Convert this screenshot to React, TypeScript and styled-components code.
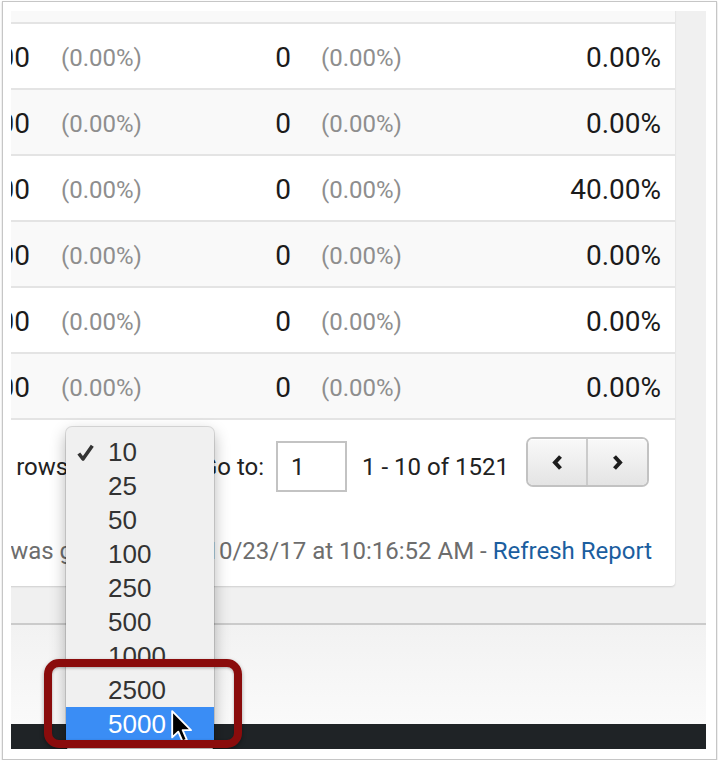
import styled, { createGlobalStyle } from "styled-components";

const GlobalStyle = createGlobalStyle`
	html, body {
		margin: 0;
		padding: 0;
		background: #fff;
	}
	body {
		font-family: Roboto, "Liberation Sans", Arial, sans-serif;
	}
`;

const Frame = styled.div`
	position: relative;
	box-sizing: border-box;
	width: 715px;
	height: 759px;
	margin: 1px 0 0 2px;
	padding: 9px 10px 10px 8px;
	border: 1px solid #c6c6c6;
	box-shadow: 0 1px 2px rgba(0, 0, 0, 0.2);
	background: #fff;
`;

const Viewport = styled.div`
	position: relative;
	height: 100%;
	overflow: hidden;
	display: flex;
	flex-direction: column;
	background: #f0f0f0;
`;

const ReportArea = styled.section`
	padding-bottom: 37px;
`;

const Card = styled.div`
	width: 814px;
	margin: -53px 0 0 -150px;
	background: #fff;
	border-radius: 0 0 4px 0;
	box-shadow: 0 1px 2px rgba(0, 0, 0, 0.14);
`;

const Row = styled.div<{ $striped: boolean }>`
	display: grid;
	grid-template-columns: 169px 110px 151px 160px 224px;
	align-items: center;
	box-sizing: border-box;
	height: 66px;
	padding-top: 4px;
	border-bottom: 2px solid #e4e4e4;
	background: ${(p) => (p.$striped ? "#f9f9f9" : "#fff")};
	font-size: 28px;
	line-height: 1;
`;

const Value = styled.div`
	text-align: right;
	color: #1b1b1b;
	white-space: nowrap;
`;

const LastValue = styled(Value)`
	padding-right: 14px;
`;

const Share = styled.div<{ $indent: number }>`
	padding-left: ${(p) => p.$indent}px;
	font-size: 24px;
	color: #8e8e8e;
	white-space: nowrap;
`;

const Pager = styled.div`
	display: flex;
	justify-content: flex-end;
	align-items: center;
	height: 59px;
	padding: 17px 26px 0 0;
	font-size: 24px;
	line-height: 28px;
	color: #222;
`;

const PagerText = styled.span<{ $gap: number }>`
	margin-right: ${(p) => p.$gap}px;
	white-space: nowrap;
`;

const RowsSelect = styled.div`
	width: 103px;
	height: 44px;
	margin: 0 12px;
	box-sizing: border-box;
	border: 2px solid #c4c4c4;
	border-radius: 6px;
	background: #f6f6f6;
`;

const PageInput = styled.div`
	box-sizing: border-box;
	width: 71px;
	height: 51px;
	margin-right: 15px;
	padding: 10px 13px;
	border: 2px solid #c3c3c3;
	font-size: 24px;
	line-height: 28px;
	color: #222;
`;

const NavGroup = styled.div`
	display: flex;
	box-sizing: border-box;
	height: 50px;
	margin-bottom: 9px;
	border: 2px solid #c2c2c2;
	border-radius: 7px;
	overflow: hidden;
`;

const NavButton = styled.div<{ $divider?: boolean }>`
	display: flex;
	align-items: center;
	justify-content: center;
	width: ${(p) => (p.$divider ? 59 : 58)}px;
	border-left: ${(p) => (p.$divider ? "2px solid #cbcbcb" : "none")};
	background: linear-gradient(#f9f9f9, #e4e4e4);
	box-shadow: inset 0 1px 0 #fff;
`;

const Footer = styled.p`
	margin: 41px 0 0;
	padding: 0 23px 21px 0;
	text-align: right;
	font-size: 24px;
	line-height: 28px;
	color: #6d6d6d;
	white-space: nowrap;
`;

const Link = styled.a`
	color: #1b5e9f;
	text-decoration: none;
`;

const Rule = styled.div`
	height: 2px;
	background: #cbcbcb;
`;

const LowerPanel = styled.div`
	flex: 1;
	background: linear-gradient(#f2f2f2, #fafafa);
`;

const DarkBar = styled.div`
	height: 25px;
	background: #1f2326;
`;

const Menu = styled.ul`
	position: absolute;
	left: 55px;
	top: 416px;
	width: 148px;
	margin: 0;
	padding: 8px 0 10px;
	list-style: none;
	box-sizing: border-box;
	background: #f0f0f0;
	border-radius: 6px;
	box-shadow: 0 0 0 1px rgba(0, 0, 0, 0.12), 0 6px 16px rgba(0, 0, 0, 0.3);
	font-family: "Liberation Sans", Arial, sans-serif;
`;

const MenuItem = styled.li<{ $active?: boolean }>`
	position: relative;
	height: 34px;
	padding-left: 42px;
	font-size: 26px;
	line-height: 34px;
	color: ${(p) => (p.$active ? "#fff" : "#333")};
	background: ${(p) => (p.$active ? "#3a8df5" : "transparent")};
`;

const Check = styled.svg`
	position: absolute;
	left: 11px;
	top: 9px;
`;

const Highlight = styled.div`
	position: absolute;
	left: 33px;
	top: 648px;
	width: 198px;
	height: 89px;
	box-sizing: border-box;
	border: 8px solid #8a0c0c;
	border-radius: 15px;
	box-shadow: 0 2px 4px rgba(0, 0, 0, 0.35), inset 0 1px 3px rgba(0, 0, 0, 0.3);
`;

const Pointer = styled.svg`
	position: absolute;
	left: 160px;
	top: 699px;
`;

const rates = ["", "0.00%", "0.00%", "40.00%", "0.00%", "0.00%", "0.00%"];
const sizes = ["10", "25", "50", "100", "250", "500", "1000", "2500", "5000"];

const Chevron = ({ flip }: { flip?: boolean }) => (
	<svg width="13" height="17" viewBox="0 0 13 17" style={flip ? { transform: "scaleX(-1)" } : undefined}>
		<polyline points="9.5,2.5 4,8.5 9.5,14.5" fill="none" stroke="#1d1d1d" strokeWidth="4" />
	</svg>
);

const App = () => {
	return (
		<>
			<GlobalStyle />
			<Frame>
				<Viewport>
					<ReportArea>
						<Card>
							{rates.map((rate, i) => (
								<Row key={i} $striped={i % 2 === 0}>
									<Value>$0.00</Value>
									<Share $indent={31}>(0.00%)</Share>
									<Value>0</Value>
									<Share $indent={30}>(0.00%)</Share>
									<LastValue>{rate || "0.00%"}</LastValue>
								</Row>
							))}
							<Pager>
								<PagerText $gap={0}>Show rows:</PagerText>
								<RowsSelect />
								<PagerText $gap={12}>Go to:</PagerText>
								<PageInput>1</PageInput>
								<PagerText $gap={17}>1 - 10 of 1521</PagerText>
								<NavGroup>
									<NavButton>
										<Chevron />
									</NavButton>
									<NavButton $divider>
										<Chevron flip />
									</NavButton>
								</NavGroup>
							</Pager>
							<Footer>
								This report was generated on 10/23/17 at 10:16:52 AM - <Link href="#">Refresh Report</Link>
							</Footer>
						</Card>
					</ReportArea>
					<Rule />
					<LowerPanel />
					<DarkBar />

					<Menu>
						{sizes.map((size, i) => (
							<MenuItem key={size} $active={size === "5000"}>
								{i === 0 && (
									<Check width="17" height="17" viewBox="0 0 17 17">
										<path d="M1.8 9.5 L6 15 L15.3 1.8" fill="none" stroke="#333" strokeWidth="3.6" strokeLinejoin="round" />
									</Check>
								)}
								{size}
							</MenuItem>
						))}
					</Menu>
					<Pointer width="22" height="33" viewBox="0 0 13 19.5">
						<path
							d="M0.7 0.7 L0.7 16.2 L4.3 12.8 L6.8 18.6 L9.3 17.5 L6.9 11.9 L11.8 11.9 Z"
							fill="#000"
							stroke="#fff"
							strokeWidth="1.1"
							strokeLinejoin="round"
						/>
					</Pointer>
					<Highlight />
				</Viewport>
			</Frame>
		</>
	);
};

export default App;
